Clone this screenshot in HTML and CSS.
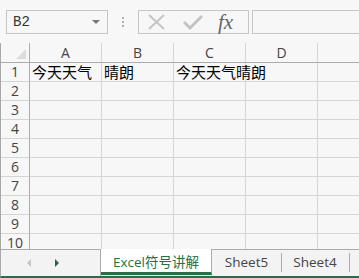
FILE: index.html
```html
<!DOCTYPE html>
<html lang="zh-CN">
<head>
    <meta charset="UTF-8">
    <meta name="viewport" content="width=device-width, initial-scale=1.0">
    <title>Excel</title>
    <link rel="stylesheet" href="styles.css">
</head>
<body>
    <div class="formula-bar">
        <div class="name-box">
            <span>B2</span>
            <span class="drop"></span>
        </div>
        <div class="grip"><i></i><i></i><i></i></div>
        <div class="fx-buttons">
            <svg class="icon-x" width="17" height="16" viewBox="0 0 17 16">
                <path d="M1 1 L16 15 M16 1 L1 15" stroke="#c4c4c4" stroke-width="2" fill="none"/>
            </svg>
            <svg class="icon-check" width="20" height="16" viewBox="0 0 20 16">
                <path d="M1 8 L7 14 L19 2" stroke="#c4c4c4" stroke-width="3" fill="none"/>
            </svg>
            <span class="fx">fx</span>
        </div>
        <div class="formula-input"></div>
    </div>

    <div class="sheet">
        <div class="row head">
            <div class="rh corner"><span class="tri"></span></div>
            <div class="cell">A</div>
            <div class="cell">B</div>
            <div class="cell">C</div>
            <div class="cell">D</div>
            <div class="cell last"></div>
        </div>
        <div class="row">
            <div class="rh">1</div>
            <div class="cell txt">今天天气</div>
            <div class="cell txt">晴朗</div>
            <div class="cell txt">今天天气晴朗</div>
            <div class="cell"></div>
            <div class="cell last"></div>
        </div>
        <div class="row"><div class="rh">2</div><div class="cell"></div><div class="cell"></div><div class="cell"></div><div class="cell"></div><div class="cell last"></div></div>
        <div class="row"><div class="rh">3</div><div class="cell"></div><div class="cell"></div><div class="cell"></div><div class="cell"></div><div class="cell last"></div></div>
        <div class="row"><div class="rh">4</div><div class="cell"></div><div class="cell"></div><div class="cell"></div><div class="cell"></div><div class="cell last"></div></div>
        <div class="row"><div class="rh">5</div><div class="cell"></div><div class="cell"></div><div class="cell"></div><div class="cell"></div><div class="cell last"></div></div>
        <div class="row"><div class="rh">6</div><div class="cell"></div><div class="cell"></div><div class="cell"></div><div class="cell"></div><div class="cell last"></div></div>
        <div class="row"><div class="rh">7</div><div class="cell"></div><div class="cell"></div><div class="cell"></div><div class="cell"></div><div class="cell last"></div></div>
        <div class="row"><div class="rh">8</div><div class="cell"></div><div class="cell"></div><div class="cell"></div><div class="cell"></div><div class="cell last"></div></div>
        <div class="row"><div class="rh">9</div><div class="cell"></div><div class="cell"></div><div class="cell"></div><div class="cell"></div><div class="cell last"></div></div>
        <div class="row"><div class="rh">10</div><div class="cell"></div><div class="cell"></div><div class="cell"></div><div class="cell"></div><div class="cell last"></div></div>
    </div>

    <div class="tab-bar">
        <div class="tab-nav">
            <span class="arrow left"></span>
            <span class="arrow right"></span>
        </div>
        <div class="tab active">Excel符号讲解</div>
        <div class="tab s5">Sheet5</div>
        <div class="tab s4">Sheet4</div>
        <div class="tab rest"></div>
    </div>
</body>
</html>
```

FILE: styles.css
```css
body {
    margin: 0;
    width: 359px;
    height: 278px;
    overflow: hidden;
    background: #f7f7f7;
    font-family: "Segoe UI", "Open Sans", "Noto Sans", "Noto Sans CJK SC", sans-serif;
    color: #444;
}

/* formula bar */
.formula-bar {
    height: 43px;
    box-sizing: border-box;
    padding-top: 10px;
    display: flex;
    align-items: flex-start;
}

.name-box {
    margin-left: 6px;
    width: 102px;
    height: 24px;
    box-sizing: border-box;
    border: 1px solid #c6c6c6;
    display: flex;
    align-items: center;
    justify-content: space-between;
    padding: 0 7px 0 6px;
    font-family: "Liberation Mono", monospace;
    font-size: 14px;
    color: #333;
}

.drop {
    width: 0;
    height: 0;
    border-left: 4px solid transparent;
    border-right: 4px solid transparent;
    border-top: 4px solid #777;
}

.grip {
    width: 30px;
    height: 24px;
    display: flex;
    flex-direction: column;
    align-items: center;
    justify-content: center;
    gap: 2px;
}

.grip i {
    width: 2px;
    height: 2px;
    background: #b0b0b0;
}

.fx-buttons {
    width: 111px;
    height: 24px;
    box-sizing: border-box;
    border: 1px solid #c6c6c6;
    display: flex;
    align-items: center;
}

.icon-x {
    margin-left: 9px;
}

.icon-check {
    margin-left: 18px;
}

.fx {
    margin-left: 15px;
    font-family: "Liberation Serif", serif;
    font-style: italic;
    font-size: 21px;
    color: #666;
    line-height: 20px;
}

.formula-input {
    margin-left: 3px;
    flex: 1;
    height: 24px;
    box-sizing: border-box;
    border: 1px solid #c6c6c6;
    border-right: none;
}

/* grid */
.sheet {
    height: 206px;
    overflow: hidden;
    border-left: 1px solid #a8a8a8;
}

.row {
    display: flex;
    height: 19px;
}

.row.head {
    height: 20px;
}

.rh {
    width: 29px;
    flex: none;
    box-sizing: border-box;
    border-right: 1px solid #ababab;
    border-bottom: 1px solid #d4d4d4;
    font-size: 14px;
    line-height: 18px;
    text-align: center;
    color: #444;
}

.cell {
    width: 72px;
    flex: none;
    box-sizing: border-box;
    border-right: 1px solid #d6d6d6;
    border-bottom: 1px solid #d6d6d6;
    white-space: nowrap;
    overflow: visible;
}

.cell.last {
    flex: 1;
    border-right: none;
}

.head .cell,
.head .rh {
    border-bottom: 1px solid #ababab;
    text-align: center;
    font-size: 14px;
    line-height: 19px;
    color: #444;
}

.corner {
    position: relative;
}

.tri {
    position: absolute;
    right: 3px;
    bottom: 3px;
    width: 0;
    height: 0;
    border-left: 10px solid transparent;
    border-bottom: 10px solid #dcdcdc;
}

.txt {
    position: relative;
    z-index: 1;
    padding-left: 2px;
    font-family: "Noto Sans CJK SC", sans-serif;
    font-size: 15px;
    line-height: 18px;
    color: #000;
}

/* sheet tabs */
.tab-bar {
    height: 29px;
    box-sizing: border-box;
    border-left: 1px solid #a8a8a8;
    border-bottom: 2px solid #217346;
    display: flex;
    background: #f3f3f3;
}

.tab-nav {
    width: 100px;
    flex: none;
    border-top: 1px solid #ababab;
    border-right: 1px solid #ababab;
    display: flex;
    align-items: center;
    gap: 24px;
    padding-left: 26px;
    box-sizing: border-box;
}

.arrow {
    width: 0;
    height: 0;
    border-top: 4px solid transparent;
    border-bottom: 4px solid transparent;
}

.arrow.left {
    border-right: 4px solid #c4c4c4;
}

.arrow.right {
    border-left: 4px solid #1e6b3f;
}

.tab {
    flex: none;
    box-sizing: border-box;
    border-top: 1px solid #ababab;
    font-size: 13.5px;
    line-height: 24px;
    color: #444;
    text-align: center;
    white-space: nowrap;
    position: relative;
}

.tab + .tab::before {
    content: "";
    position: absolute;
    left: 0;
    top: 3px;
    height: 19px;
    width: 1px;
    background: #ababab;
}

.tab.active {
    width: 111px;
    border-top: none;
    background: #fff;
    color: #217346;
    border-right: 1px solid #ababab;
    border-bottom: 3px solid #217346;
    margin-bottom: 1px;
    padding-top: 1px;
}

.tab.active + .tab::before {
    display: none;
}

.tab.s5 {
    width: 69px;
}

.tab.s4 {
    width: 68px;
}

.tab.rest {
    flex: 1;
}
```
